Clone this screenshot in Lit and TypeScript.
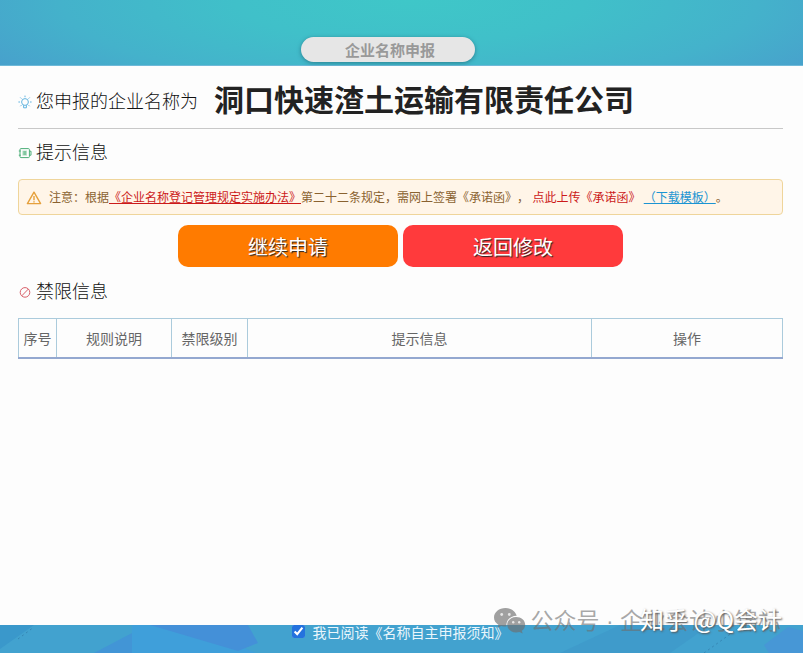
import { LitElement, html, css, svg } from "lit";
import { customElement, state } from "lit/decorators.js";

const bulb = svg`<svg class="icon blue" viewBox="0 0 14 14" aria-hidden="true">
  <circle cx="7" cy="7" r="3.4"/><path d="M5.6 10.2v2.6h2.8v-2.6M7 .6v1.6M.4 7H2M12 7h1.6M2.3 2.5l1.1 1.1M11.7 2.5l-1.1 1.1M2.4 11.2l1-1M11.6 11.2l-1-1"/></svg>`;

const note = svg`<svg class="icon green" viewBox="0 0 14 14" aria-hidden="true">
  <rect x="2" y="2.6" width="9.4" height="9" rx="1"/><path d="M11.4 5.2h1.6v4h-1.6M.8 5h2M.8 9.2h2"/><rect class="fill" x="4.4" y="4.6" width="4.6" height="5"/><path d="M5.4 6h2.6M5.4 8h2.6"/></svg>`;

const ban = svg`<svg class="icon red" viewBox="0 0 14 14" aria-hidden="true">
  <circle cx="7" cy="7.4" r="4.8"/><path d="M3.8 10.8 10.4 4"/></svg>`;

const warn = svg`<svg class="warn" viewBox="0 0 16 16" aria-hidden="true">
  <path d="M8 2.2 1.4 13.6h13.2z"/><path d="M8 6v4.2M8 11.2v1.2"/></svg>`;

const chat = svg`<svg class="chat" viewBox="0 0 32 26" aria-hidden="true">
  <path class="body" d="M11.5 0C5.1 0 0 4.2 0 9.4c0 3 1.7 5.6 4.4 7.3L3.3 20l4-2c1.3.4 2.7.6 4.2.6h1C11.5 12.5 16 8 22.700 7.800 21.600 3.300 17 0 11.500 0z"/>
  <path class="body" d="M22.2 9c-5 0-9 3.400-9 7.700s4 7.700 9 7.700c1.200 0 2.300-.2 3.300-.5l3.200 1.700-.9-2.800c2.100-1.400 3.400-3.600 3.400-6.100C31.200 12.400 27.200 9 22.200 9z"/>
  <circle class="eye" cx="7.7" cy="6.5" r="1.4"/><circle class="eye" cx="15.3" cy="6.5" r="1.4"/>
  <circle class="eye" cx="19.2" cy="14.3" r="1.2"/><circle class="eye" cx="25.2" cy="14.3" r="1.2"/></svg>`;

@customElement("app-root")
export class AppRoot extends LitElement {
  @state() private agreed = true;

  static styles = css`
    :host {
      position: relative;
      display: flex;
      flex-direction: column;
      min-height: 100vh;
      font-family: "Liberation Sans", "Noto Sans CJK SC", sans-serif;
      font-size: 14px;
      color: #222;
      text-spacing-trim: space-all;
    }
    * { box-sizing: border-box; }
    .top {
      display: flex;
      justify-content: center;
      align-items: flex-end;
      height: 66px;
      padding: 0 28px 3px 0;
      background: radial-gradient(ellipse 62% 190% at 51% 0, #3fc7c8 0, #40c0c9 35%, #44b2cb 70%, #489fcc 100%);
      border-bottom: 1px solid #6fb9d8;
    }
    .tab {
      width: 174px;
      height: 25px;
      padding: 0 0 0 5px;
      border: 0;
      border-radius: 13px;
      background: #e6e6e6;
      box-shadow: 0 1px 4px #2a7f90;
      color: #999;
      font: bold 15px/25px "Noto Sans CJK SC", sans-serif;
    }
    main {
      flex: 1;
      padding: 12px 20px 0 18px;
      background: #fdfdfd;
    }
    .name {
      display: flex;
      align-items: flex-start;
      height: 51px;
      border-bottom: 1px solid #c8c8c8;
    }
    .name h2 { margin-top: 10px; }
    h1, h2 { margin: 0; }
    h1 {
      margin-left: 16px;
      font: bold 30px/40px "Noto Sans CJK SC", sans-serif;
    }
    h2 {
      display: flex;
      align-items: center;
      gap: 4px;
      color: #111;
      font: 300 18px/24px "Noto Sans CJK SC", sans-serif;
      white-space: nowrap;
    }
    .icon {
      width: 14px;
      height: 14px;
      margin-top: 4px;
      fill: none;
      stroke-width: 1;
    }
    .blue { stroke: #62b4e0; }
    .green { stroke: #4cae78; }
    .green .fill { fill: #b5dfc6; stroke: none; }
    .red { stroke: #d9606a; }
    .tips { margin-top: 10px; }
    .alert {
      display: flex;
      align-items: center;
      min-height: 36px;
      margin: 16px 0 10px;
      padding: 2px 7px 0;
      border: 1px solid #efd59b;
      border-radius: 4px;
      background: #fff5e8;
      color: #8a6230;
      font-size: 12px;
      line-height: 20px;
    }
    .alert p { margin: 0 0 0 7px; }
    .warn {
      flex: none;
      width: 16px;
      height: 16px;
      fill: none;
      stroke: #e5a03c;
      stroke-width: 1.4;
      stroke-linejoin: round;
    }
    .law { color: #cc1a1a; }
    .upload { color: #cc1a1a; text-decoration: none; }
    .download { color: #1b94d2; }
    .actions {
      display: flex;
      justify-content: center;
      gap: 5px;
    }
    .action {
      width: 220px;
      height: 42px;
      padding: 2px 0 0;
      border: 0;
      border-radius: 10px;
      color: #fff;
      font: 20px/28px "Noto Sans CJK SC", sans-serif;
      text-shadow: 1px 1px 1px #222;
    }
    .go { background: #ff7b00; }
    .back { background: #ff3a3c; }
    .limits { margin-top: 11px; }
    table {
      width: 100%;
      margin-top: 16px;
      border-collapse: collapse;
      table-layout: fixed;
    }
    th {
      height: 39px;
      padding: 0;
      border: 1px solid #abcbdc;
      border-bottom: 2px solid #94a8d0;
      color: #666;
      font-weight: 400;
    }
    .c-no { width: 5%; }
    .c-rule { width: 15%; }
    .c-level { width: 10%; }
    .c-tip { width: 45%; }
    footer {
      position: relative;
      display: flex;
      justify-content: center;
      height: 28px;
      padding-right: 3px;
      overflow: hidden;
      background: #42a2cf;
    }
    .facets {
      position: absolute;
      inset: 0;
      width: 100%;
      height: 100%;
    }
    .agree {
      position: relative;
      display: flex;
      align-items: flex-start;
      gap: 8px;
      height: 20px;
      color: #eaf6fc;
      line-height: 17px;
    }
    .agree input {
      width: 13px;
      height: 13px;
      margin: 0;
      accent-color: #2472de;
    }
    .source, .mark {
      position: absolute;
      display: flex;
      align-items: center;
      white-space: nowrap;
      pointer-events: none;
    }
    .source {
      right: 22px;
      bottom: 16px;
      gap: 5px;
      color: rgba(110, 110, 110, 0.6);
      font: 23px/32px "Liberation Sans", "Noto Sans CJK SC", sans-serif;
    }
    .chat { width: 32px; height: 26px; }
    .body { fill: rgba(110, 110, 110, 0.65); }
    .eye { fill: #e6e6e6; }
    .mark {
      right: 21px;
      bottom: 18px;
      color: #fff;
      font: 24px/32px "Noto Sans CJK SC", sans-serif;
      text-shadow: 1px 1px 2px #555;
    }
  `;

  render() {
    return html`
      <header class="top"><button class="tab" type="button">企业名称申报</button></header>
      <main>
        <div class="name">
          <h2>${bulb}您申报的企业名称为</h2>
          <h1>洞口快速渣土运输有限责任公司</h1>
        </div>
        <h2 class="tips">${note}提示信息</h2>
        <div class="alert">
          ${warn}
          <p>注意：根据<a class="law" href="#law">《企业名称登记管理规定实施办法》</a>第二十二条规定，需网上签署《承诺函》， <a class="upload" href="#upload">点此上传《承诺函》</a> <a class="download" href="#template">（下载模板）</a>。</p>
        </div>
        <div class="actions">
          <button class="action go" type="button">继续申请</button>
          <button class="action back" type="button">返回修改</button>
        </div>
        <h2 class="limits">${ban}禁限信息</h2>
        <table>
          <thead>
            <tr>
              <th class="c-no" scope="col">序号</th>
              <th class="c-rule" scope="col">规则说明</th>
              <th class="c-level" scope="col">禁限级别</th>
              <th class="c-tip" scope="col">提示信息</th>
              <th scope="col">操作</th>
            </tr>
          </thead>
        </table>
      </main>
      <footer>
        <svg class="facets" viewBox="0 0 803 28" preserveAspectRatio="none" aria-hidden="true">
          <path fill="#3a98cb" d="M0 0h34L0 24z"/>
          <path fill="#4295d6" d="M94 28l38-20v20z"/>
          <path fill="#3f9fda" d="M132 0h56l68 28H132z"/>
          <path fill="#4490d8" d="M150 0h98l10 18-20 8z"/>
          <path fill="#3f9bcb" d="M560 28l60-28h90l-40 28z"/>
          <path fill="#4797d6" d="M764 20l24-18 15 4v22h-34z"/>
          <path fill="none" stroke="#3686b4" stroke-dasharray="2 3" d="M704 28l36-26M18 14 34 2"/>
        </svg>
        <label class="agree">
          <input type="checkbox" .checked=${this.agreed}
            @change=${(e: Event) => (this.agreed = (e.target as HTMLInputElement).checked)} />
          我已阅读《名称自主申报须知》
        </label>
      </footer>
      <div class="source">${chat}<span>公众号 · 企业会计小锦标</span></div>
      <div class="mark">知乎 @Q会计</div>
    `;
  }
}
